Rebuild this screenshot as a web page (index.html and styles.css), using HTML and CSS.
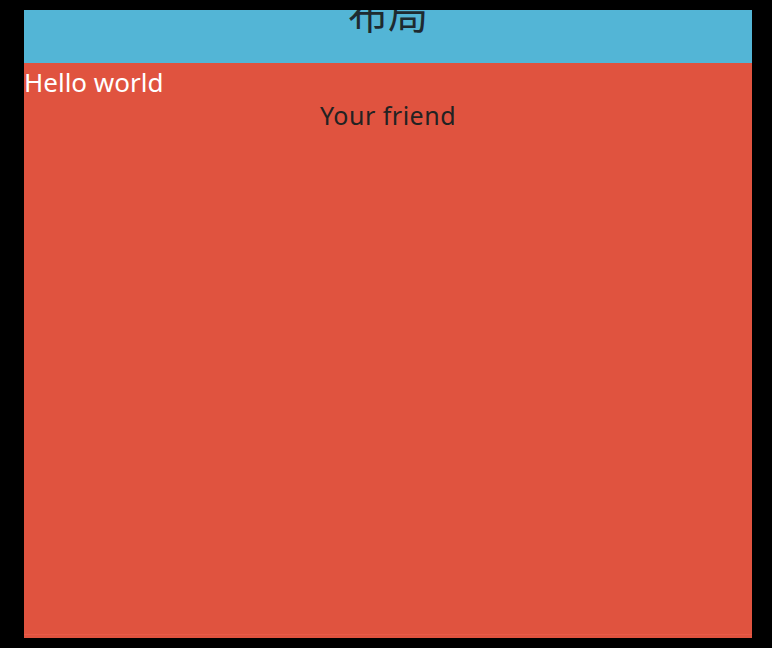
FILE: index.html
```html
<!DOCTYPE html>
<html>
<head>
<meta charset="utf-8">
<link rel="stylesheet" href="styles.css">
</head>
<body>
<div class="screen">
  <header class="header"><h1 class="title">布局</h1></header>
  <main class="content">
    <p class="hello">Hello world</p>
    <p class="friend">Your friend</p>
  </main>
  <div class="edge"></div>
  <div class="foot"></div>
</div>
</body>
</html>
```
FILE: styles.css
```css
html, body { margin: 0; padding: 0; background: #000; }
body { padding: 10px 20px 10px 24px; }
.screen {
  width: 728px;
  height: 628px;
  display: flex;
  flex-direction: column;
  font-family: "Noto Sans", "Noto Sans CJK SC", sans-serif;
}
.header {
  height: 53px;
  flex: none;
  background: #53b5d6;
  overflow: hidden;
  text-align: center;
}
.title {
  margin: -23px 0 0;
  font-size: 40px;
  line-height: 50px;
  font-weight: 400;
  color: #1e2a30;
  font-family: "Noto Sans CJK SC", sans-serif;
}
.content {
  flex: 1;
  background: #e0533f;
}
.hello {
  margin: 0;
  font-size: 26px;
  line-height: 38px;
  color: #fff;
}
.friend {
  margin: -6px 0 0;
  text-align: center;
  font-size: 25px;
  line-height: 40px;
  color: #222;
  letter-spacing: 0.5px;
}
.edge { height: 1px; background: #ea5a48; flex: none; }
.foot { height: 3px; background: #e0533f; flex: none; }
```
